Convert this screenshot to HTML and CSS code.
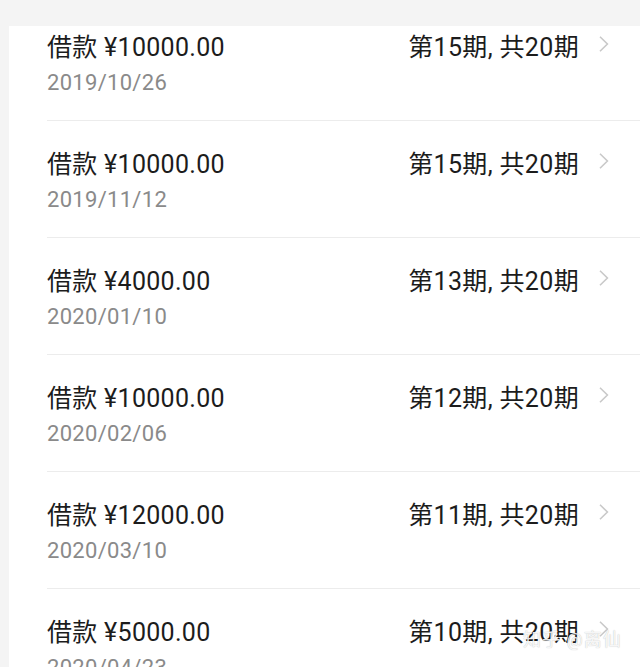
FILE: index.html
```html
<!DOCTYPE html>
<html lang="zh-CN">
<head>
  <meta charset="utf-8">
  <title>借款记录</title>
  <link rel="stylesheet" href="styles.css">
</head>
<body>
  <div class="list">
    <div class="row">
      <div class="info">
        <div class="title">借款 ¥10000.00</div>
        <div class="date">2019/10/26</div>
      </div>
      <div class="term">第15期, 共20期</div>
      <svg class="arrow" width="10" height="16" viewBox="0 0 10 16"><path d="M1 0.8 L8.4 8 L1 15.2" fill="none" stroke="#c9c9c9" stroke-width="1.6"/></svg>
    </div>
    <div class="row">
      <div class="info">
        <div class="title">借款 ¥10000.00</div>
        <div class="date">2019/11/12</div>
      </div>
      <div class="term">第15期, 共20期</div>
      <svg class="arrow" width="10" height="16" viewBox="0 0 10 16"><path d="M1 0.8 L8.4 8 L1 15.2" fill="none" stroke="#c9c9c9" stroke-width="1.6"/></svg>
    </div>
    <div class="row">
      <div class="info">
        <div class="title">借款 ¥4000.00</div>
        <div class="date">2020/01/10</div>
      </div>
      <div class="term">第13期, 共20期</div>
      <svg class="arrow" width="10" height="16" viewBox="0 0 10 16"><path d="M1 0.8 L8.4 8 L1 15.2" fill="none" stroke="#c9c9c9" stroke-width="1.6"/></svg>
    </div>
    <div class="row">
      <div class="info">
        <div class="title">借款 ¥10000.00</div>
        <div class="date">2020/02/06</div>
      </div>
      <div class="term">第12期, 共20期</div>
      <svg class="arrow" width="10" height="16" viewBox="0 0 10 16"><path d="M1 0.8 L8.4 8 L1 15.2" fill="none" stroke="#c9c9c9" stroke-width="1.6"/></svg>
    </div>
    <div class="row">
      <div class="info">
        <div class="title">借款 ¥12000.00</div>
        <div class="date">2020/03/10</div>
      </div>
      <div class="term">第11期, 共20期</div>
      <svg class="arrow" width="10" height="16" viewBox="0 0 10 16"><path d="M1 0.8 L8.4 8 L1 15.2" fill="none" stroke="#c9c9c9" stroke-width="1.6"/></svg>
    </div>
    <div class="row">
      <div class="info">
        <div class="title">借款 ¥5000.00</div>
        <div class="date">2020/04/23</div>
      </div>
      <div class="term">第10期, 共20期</div>
      <svg class="arrow" width="10" height="16" viewBox="0 0 10 16"><path d="M1 0.8 L8.4 8 L1 15.2" fill="none" stroke="#c9c9c9" stroke-width="1.6"/></svg>
    </div>
  </div>
  <div class="mark">知乎 @离仙</div>
</body>
</html>
```
FILE: styles.css
```css
html,
body {
  margin: 0;
  padding: 0;
}
body {
  height: 667px;
  overflow: hidden;
  background: #f4f4f4;
  font-family: Roboto, "Noto Sans CJK SC", sans-serif;
}
.list {
  margin: 26px 0 0 9px;
  background: #fff;
  padding-left: 38px;
}
.row {
  display: flex;
  align-items: flex-start;
  height: 87px;
  padding-top: 29px;
  border-bottom: 1px solid #ececec;
}
.row:first-child {
  padding-top: 7px;
}
.info {
  flex: 1;
}
.title {
  font-size: 25px;
  line-height: 30px;
  letter-spacing: 0.3px;
  color: #1c1c1c;
}
.date {
  margin-top: 7px;
  font-size: 22px;
  line-height: 26px;
  letter-spacing: 0.3px;
  color: #8a8a8a;
}
.term {
  font-size: 25px;
  line-height: 30px;
  letter-spacing: 0.35px;
  color: #1c1c1c;
}
.arrow {
  margin: 3px 31px 0 20px;
}
.mark {
  position: absolute;
  left: 523px;
  top: 629px;
  font-size: 18px;
  line-height: 22px;
  letter-spacing: 1px;
  color: rgba(255, 255, 255, 0.9);
  text-shadow: 0 0 1px rgba(0, 0, 0, 0.3);
}
```
